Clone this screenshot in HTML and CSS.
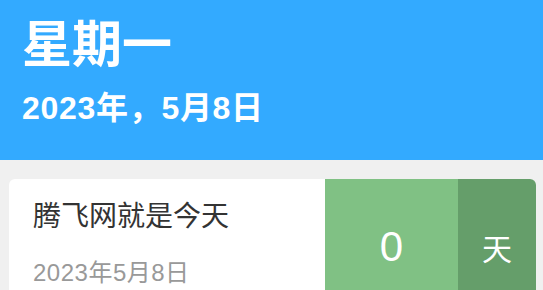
FILE: index.html
```html
<!DOCTYPE html>
<html lang="zh-CN">
<head>
  <meta charset="UTF-8">
  <title>倒数日</title>
  <link rel="stylesheet" href="styles.css">
</head>
<body>

<!-- Header -->
<div class="top-header">
  <div class="weekday">星期一</div>
  <div class="today-date">2023年，5月8日</div>
</div>

<!-- Day list -->
<div class="day-list">
  <div class="day-card">
    <div class="day-info">
      <div class="day-title">腾飞网就是今天</div>
      <div class="day-date">2023年5月8日</div>
    </div>
    <div class="day-count">0</div>
    <div class="day-unit">天</div>
  </div>
</div>

</body>
</html>
```

FILE: styles.css
```css
body {
  margin: 0;
  background: #f0f0f0;
  font-family: "Liberation Sans", "Noto Sans CJK SC", sans-serif;
}
.top-header {
  background: #33aaff;
  color: #fff;
  height: 160px;
  box-sizing: border-box;
  padding: 13px 22px 0;
}
.weekday {
  font-size: 50px;
  font-weight: bold;
  line-height: 64px;
}
.today-date {
  font-size: 32px;
  font-weight: bold;
  line-height: 40px;
  letter-spacing: 0.7px;
  margin-top: 11px;
}
.day-list {
  padding: 19px 7px 0 9px;
}
.day-card {
  display: flex;
  height: 136px;
  background: #fff;
  border-radius: 6px;
  overflow: hidden;
}
.day-info {
  flex: 1;
  padding: 19px 24px 0;
}
.day-title {
  font-size: 28px;
  color: #333;
  line-height: 38px;
}
.day-date {
  font-size: 24px;
  color: #999;
  line-height: 30px;
  letter-spacing: 0.5px;
  margin-top: 22px;
}
.day-count {
  width: 133px;
  background: #80c184;
  color: #fff;
  font-size: 42px;
  display: flex;
  align-items: center;
  justify-content: center;
}
.day-unit {
  width: 78px;
  background: #659e6a;
  color: #fff;
  font-size: 30px;
  display: flex;
  align-items: center;
  justify-content: center;
}
```
